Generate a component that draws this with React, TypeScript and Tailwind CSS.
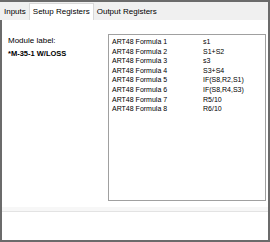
import React from "react";

const TABS = [
  { label: "Inputs", active: false },
  { label: "Setup Registers", active: true },
  { label: "Output Registers", active: false },
];

const FORMULAS = [
  { name: "ART48 Formula 1", value: "s1" },
  { name: "ART48 Formula 2", value: "S1+S2" },
  { name: "ART48 Formula 3", value: "s3" },
  { name: "ART48 Formula 4", value: "S3+S4" },
  { name: "ART48 Formula 5", value: "IF(S8,R2,S1)" },
  { name: "ART48 Formula 6", value: "IF(S8,R4,S3)" },
  { name: "ART48 Formula 7", value: "R5/10" },
  { name: "ART48 Formula 8", value: "R6/10" },
];

export default function App() {
  return (
    <div
      className="w-[270px] h-[242px] flex flex-col bg-white border-t-2 border-r-2 border-[#6b6b6b] text-black"
      style={{ fontFamily: '"Liberation Sans", Arial, sans-serif' }}
    >
      {/* ── Tab strip ───────────────────────────────────────────── */}
      <div className="h-[18px] flex items-end bg-[#f0f0f0] pl-[1px] text-[8px] leading-none">
        {TABS.map((t) =>
          t.active ? (
            <div
              key={t.label}
              className="h-[17px] flex items-center px-[3px] bg-white border-x border-t border-[#d9d9d9]"
            >
              {t.label}
            </div>
          ) : (
            <div key={t.label} className="h-[16px] flex items-center px-[3px]">
              {t.label}
            </div>
          )
        )}
      </div>

      {/* ── Panel ───────────────────────────────────────────────── */}
      <div className="flex-1 flex flex-col border-l-2 border-b-2 border-[#6b6b6b]">
        <div className="flex pt-[14px]">
          <div className="w-[106px] pl-[6px] pt-[2px]">
            <div className="text-[8px] leading-[10px]">Module label:</div>
            <div className="mt-[3px] text-[7.5px] leading-[10px] font-bold">
              *M-35-1 W/LOSS
            </div>
          </div>
          <div className="w-[158px] h-[167px] border border-[#a0a0a0] pt-[2px] pl-[3px] text-[7px] leading-[9.6px]">
            {FORMULAS.map((f) => (
              <div key={f.name} className="flex">
                <span className="w-[91px]">{f.name}</span>
                <span>{f.value}</span>
              </div>
            ))}
          </div>
        </div>
        <div className="mt-[6px] h-[5px] bg-[#f7f7f7] border-b border-[#e3e3e3]" />
      </div>
    </div>
  );
}
